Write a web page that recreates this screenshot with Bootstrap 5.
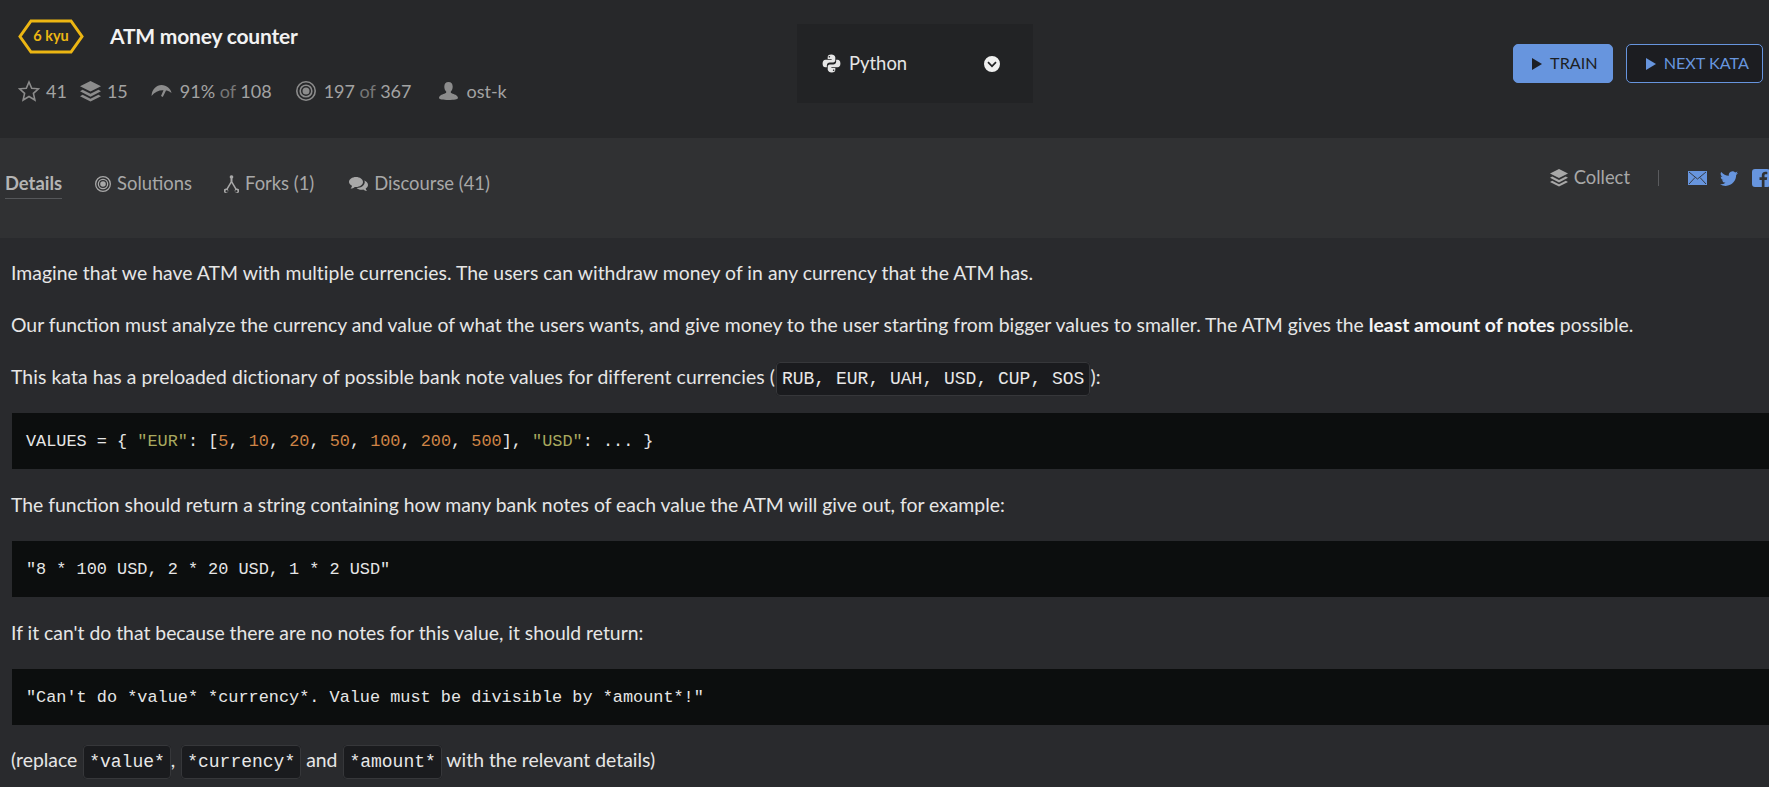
<!DOCTYPE html>
<html lang="en">
<head>
<meta charset="UTF-8" />
<title>ATM money counter</title>
<link href="https://cdn.jsdelivr.net/npm/bootstrap@5.3.0/dist/css/bootstrap.min.css" rel="stylesheet" />
<style>
  html, body { height: 787px; overflow: hidden; }
  body { background: #292a2d; color: #e3e3e3; font-family: Lato, "Liberation Sans", sans-serif; font-size: 19.36px; }
  svg { fill: currentColor; flex: none; }

  .kata-head { height: 138px; background: #27282a; }
  .kata-left { width: 797px; padding: 19px 0 0 18px; }
  .kata-title { font-size: 21px; font-weight: 700; color: #f2f2f2; margin: -2px 0 0 26px; letter-spacing: -.2px; }
  .kyu-text { font: 700 14.5px Lato, sans-serif; fill: #ecb613; }
  .stat-row { color: #a3a3a3; font-size: 18px; margin-top: 25px; line-height: 24px; }
  .stat-row svg { color: #8c8c8c; }
  .stat-dim { color: #777; }
  .stat-num { margin-left: 6px; }
  .stat-pack { margin-left: 13px; }
  .stat-speed { margin-left: 23px; }
  .stat-hits { margin-left: 24px; }
  .stat-user { margin-left: 27px; }
  .stat-name { margin-left: 7px; }

  .lang-box { width: 236px; height: 79px; margin-top: 24px; background: #222325; color: #e6e6e6; padding: 0 33px 0 25px; font-size: 18.4px; }
  .lang-chevron { color: #f0f0f0; }

  .kata-actions { margin: 44px 6px 0 auto; gap: 13px; }
  .act-btn { height: 39px; font-size: 16.2px; border-radius: 5px; display: flex; align-items: center; gap: 8px; }
  .act-train { background: #6795de; border: 1px solid #6795de; color: #1d1f24; padding: 0 14px 0 18px; }
  .act-next { background: #1c1d21; border: 1px solid #6795de; color: #6795de; padding: 0 13px 0 19px; }

  .kata-tabs { height: 100px; background: #303133; color: #a8a8a8; padding: 0 0 0 5px; font-size: 18.4px; }
  .tab-item { height: 30px; margin-top: 31px; gap: 6px; }
  .tab-active { font-weight: 700; color: #b4b4b4; border-bottom: 1px solid #55575a; margin-right: 33px; }
  .tab-gap { margin-right: 32px; }
  .tab-wide { margin-right: 35px; }
  .kata-share { margin: 20px -1px 0 auto; height: 40px; }
  .share-icon { margin-right: 6px; }
  .share-blue { color: #6795de; }
  .share-sep { width: 1px; height: 16px; background: #5a5b5e; margin: 0 29px 0 28px; }
  .share-tw { margin-left: 13px; }
  .share-fb { margin-left: 14px; }

  .kata-desc { padding: 0 0 0 11px; line-height: 27px; }
  .kata-desc p { margin: 0 0 25px; white-space: nowrap; color: #e6e6e6; }
  .kata-desc p:first-child { padding-top: 21px; letter-spacing: .04px; margin-bottom: 25px; }
  .kata-desc p:has(+ .code-block) { margin-bottom: 23px; }
  .kata-desc .wide-line { letter-spacing: .08px; }
  .kata-desc .lead-in { margin-bottom: 22px; }
  .kata-desc .last-line { margin-top: -1px; }
  .code-block { background: #0c0e0e; color: #e6e6e6; margin: 0 -1px 22px 1px; height: 56px; padding: 16px 14px; font: 16.86px/26px "Liberation Mono", monospace; white-space: pre; overflow: hidden; border-radius: 0; }
  .code-block code { color: inherit; font: inherit; }
  .tok-str { color: #a9a95f; }
  .tok-num { color: #cf8446; }
  .inline-code { background: #1a1b1e; border: 1px solid #36373a; border-radius: 4px; color: #e8e8e8; font: 18px "Liberation Mono", monospace; letter-spacing: 0; padding: 6px 5px; margin: 0 0 0 1px; }
  .kata-desc b { color: #f5f5f5; }
</style>
</head>
<body>
<svg width="0" height="0" class="position-absolute">
  <symbol id="i-layers" viewBox="1 1 18 18"><path d="M10 1l9 4.500-9 4.500-9-4.500z"/><path d="M3.200 8.600L10 12l6.800-3.400L19 9.800l-9 4.600-9-4.600z"/><path d="M3.200 12.800L10 16.200l6.800-3.400 2.200 1.200-9 4.600-9-4.600z"/></symbol>
  <symbol id="i-target" viewBox="0 0 20 20"><path fill-rule="evenodd" d="M10 0a10 10 0 1 1 0 20 10 10 0 0 1 0-20zm0 1.600a8.400 8.400 0 1 0 0 16.800 8.400 8.400 0 0 0 0-16.800zM10 3.400a6.600 6.600 0 1 1 0 13.200 6.600 6.600 0 0 1 0-13.200zm0 1.600a5 5 0 1 0 0 10 5 5 0 0 0 0-10zM10 6.500a3.500 3.500 0 1 1 0 7 3.500 3.500 0 0 1 0-7z"/></symbol>
  <symbol id="i-python" viewBox="0 0 16 16"><g id="py-half"><path fill-rule="evenodd" d="M7.900.5C5.500.5 4.800 1.400 4.800 2.700v1.500h3.300v.6H2.900C1.500 4.800.5 5.900.5 8c0 2.200 1 3.200 2.300 3.200h1.300V9.500c0-1.300 1.100-2.300 2.400-2.300h2.900c1 0 1.800-.8 1.800-1.900V2.700C10.800 1.400 9.700.5 7.900.5zM6.200 1.600a.7.7 0 1 1 0 1.400.7.7 0 0 1 0-1.400z"/></g><use href="#py-half" transform="rotate(180 8 8)"/></symbol>
</svg>

<header class="kata-head d-flex">
  <div class="kata-left">
    <div class="d-flex align-items-center">
      <svg width="66" height="35" viewBox="0 0 66 35">
        <polygon points="13,2 53,2 64,17.500 53,33 13,33 2,17.500" fill="none" stroke="#ecb613" stroke-width="3"/>
        <text class="kyu-text" x="33" y="22" text-anchor="middle">6 kyu</text>
      </svg>
      <h1 class="kata-title">ATM money counter</h1>
    </div>
    <div class="stat-row d-flex align-items-center">
      <svg width="22" height="22" viewBox="0 0 22 22"><path d="M11 2l2.700 6.200 6.800.6-5.100 4.500 1.500 6.700L11 16.500 5.100 20l1.500-6.700L1.500 8.800l6.800-.6z" fill="none" stroke="currentColor" stroke-width="1.600"/></svg>
      <span class="stat-num">41</span>
      <svg class="stat-pack" width="21" height="21"><use href="#i-layers"/></svg>
      <span class="stat-num">15</span>
      <svg class="stat-speed" width="21" height="14" viewBox="0 0 21 14"><path d="M.5 12C1 5 5.500 1 10.500 1s9.500 4 10 8C18 7 16 6.500 15 6.500L11.800 13 10 12l2.500-5.800C8 6 3.500 8 .5 12z"/></svg>
      <span class="ms-2">91% <span class="stat-dim">of</span> 108</span>
      <svg class="stat-hits" width="20" height="20"><use href="#i-target"/></svg>
      <span class="ms-2">197 <span class="stat-dim">of</span> 367</span>
      <svg class="stat-user" width="21" height="21" viewBox="0 0 21 21"><path d="M10.500 1c2.800 0 4.200 2 4.200 4.700 0 2.100-.9 4-2 5 0 1 .5 1.500 2 2 2.500.8 5.300 2 5.300 4.300 0 1.300-4 2-9.500 2S1 18.300 1 17c0-2.300 2.800-3.500 5.300-4.300 1.500-.5 2-1 2-2-1.100-1-2-2.900-2-5C6.300 3 7.700 1 10.500 1z"/></svg>
      <span class="stat-name">ost-k</span>
    </div>
  </div>
  <div class="lang-box d-flex align-items-center">
    <svg width="19" height="19"><use href="#i-python"/></svg>
    <span class="ms-2">Python</span>
    <svg class="lang-chevron ms-auto" width="16" height="16" viewBox="0 0 16 16"><path fill-rule="evenodd" d="M8 0a8 8 0 1 1 0 16A8 8 0 0 1 8 0zM4.600 5.500L3.400 6.800 8 11.400l4.600-4.600-1.200-1.300L8 8.900z"/></svg>
  </div>
  <div class="kata-actions d-flex">
    <a class="act-btn act-train text-decoration-none" href="#"><svg width="10" height="12" viewBox="0 0 10 12"><path d="M0 0l10 6-10 6z"/></svg>TRAIN</a>
    <a class="act-btn act-next text-decoration-none" href="#"><svg width="10" height="12" viewBox="0 0 10 12"><path d="M0 0l10 6-10 6z"/></svg>NEXT KATA</a>
  </div>
</header>

<nav class="kata-tabs d-flex">
  <div class="tab-item tab-active d-flex align-items-center">Details</div>
  <div class="tab-item tab-gap d-flex align-items-center"><svg width="16" height="16"><use href="#i-target"/></svg>Solutions</div>
  <div class="tab-item tab-wide d-flex align-items-center"><svg width="15" height="20" viewBox="0 0 15 20"><path d="M7.500 1.200a1.800 1.800 0 0 1 1 3.300v3.200l4 6.800a2.300 2.300 0 1 1-1.300.8L7.500 9 3.800 15.300a2.300 2.300 0 1 1-1.300-.8l4-6.800V4.500a1.800 1.800 0 0 1 1-3.300zM2.700 16a1.200 1.200 0 1 0 0 2.400 1.200 1.200 0 0 0 0-2.400zm9.600 0a1.200 1.200 0 1 0 0 2.400 1.200 1.200 0 0 0 0-2.400z"/></svg>Forks (1)</div>
  <div class="tab-item d-flex align-items-center"><svg width="19" height="16" viewBox="0 0 19 16"><path d="M7 1c3.800 0 7 2.200 7 5s-3.200 5-7 5l-1.200-.1C4.700 12 3.200 12.500 1.500 12.600c.8-.8 1.400-1.800 1.500-2.800C1.200 8.900 0 7.500 0 6c0-2.800 3.200-5 7-5z"/><path d="M15.200 4.500C17.400 5.400 19 7 19 9c0 1.400-.9 2.600-2.300 3.500.1.900.6 1.800 1.300 2.500-1.500-.1-2.800-.6-3.800-1.500-.6.100-1.100.2-1.700.2-2 0-3.800-.7-4.900-1.800 4.600.1 8.200-2.700 8.200-6.200 0-.1 0-.1-.2-.2z"/></svg>Discourse (41)</div>
  <div class="kata-share d-flex align-items-center">
    <svg width="18" height="18" class="share-icon"><use href="#i-layers"/></svg>
    <span>Collect</span>
    <span class="share-sep"></span>
    <svg class="share-blue" width="19" height="14" viewBox="0 0 19 14"><path d="M0 0h19v14H0z"/><path d="M1 1l8.500 7L18 1M1 13l6-6.500M18 13l-6-6.500" fill="none" stroke="#303133" stroke-width=".9"/></svg>
    <svg class="share-blue share-tw" width="18" height="18" viewBox="0 0 16 16"><path d="M5.026 15c6.038 0 9.341-5.003 9.341-9.334 0-.14 0-.282-.006-.422A6.685 6.685 0 0 0 16 3.542a6.658 6.658 0 0 1-1.889.518 3.301 3.301 0 0 0 1.447-1.817 6.533 6.533 0 0 1-2.087.793A3.286 3.286 0 0 0 7.875 6.030a9.325 9.325 0 0 1-6.767-3.429 3.289 3.289 0 0 0 1.018 4.382A3.323 3.323 0 0 1 .64 6.575v.045a3.288 3.288 0 0 0 2.632 3.218 3.203 3.203 0 0 1-.865.115 3.230 3.230 0 0 1-.614-.057 3.283 3.283 0 0 0 3.067 2.277A6.588 6.588 0 0 1 .78 13.580a6.320 6.320 0 0 1-.78-.045A9.344 9.344 0 0 0 5.026 15z"/></svg>
    <svg class="share-blue share-fb" width="18" height="18" viewBox="0 0 18 18"><path fill-rule="evenodd" d="M3 0h12a3 3 0 0 1 3 3v12a3 3 0 0 1-3 3h-2.500v-7h2.300l.4-2.700h-2.700V6.600c0-.8.300-1.300 1.400-1.300h1.400V2.900c-.3 0-1.100-.1-2-.1-2.100 0-3.500 1.300-3.500 3.600v1.900H7.500V11h2.300v7H3a3 3 0 0 1-3-3V3a3 3 0 0 1 3-3z"/></svg>
  </div>
</nav>

<main class="kata-desc">
  <p>Imagine that we have ATM with multiple currencies. The users can withdraw money of in any currency that the ATM has.</p>
  <p>Our function must analyze the currency and value of what the users wants, and give money to the user starting from bigger values to smaller. The ATM gives the <b>least amount of notes</b> possible.</p>
  <p class="wide-line">This kata has a preloaded dictionary of possible bank note values for different currencies (<code class="inline-code">RUB, EUR, UAH, USD, CUP, SOS</code>):</p>
  <pre class="code-block"><code>VALUES = { <span class="tok-str">"EUR"</span>: [<span class="tok-num">5</span>, <span class="tok-num">10</span>, <span class="tok-num">20</span>, <span class="tok-num">50</span>, <span class="tok-num">100</span>, <span class="tok-num">200</span>, <span class="tok-num">500</span>], <span class="tok-str">"USD"</span>: ... }</code></pre>
  <p>The function should return a string containing how many bank notes of each value the ATM will give out, for example:</p>
  <pre class="code-block"><code>"8 * 100 USD, 2 * 20 USD, 1 * 2 USD"</code></pre>
  <p class="lead-in">If it can't do that because there are no notes for this value, it should return:</p>
  <pre class="code-block"><code>"Can't do *value* *currency*. Value must be divisible by *amount*!"</code></pre>
  <p class="last-line">(replace <code class="inline-code">*value*</code>, <code class="inline-code">*currency*</code> and <code class="inline-code">*amount*</code> with the relevant details)</p>
</main>
<script src="https://cdn.jsdelivr.net/npm/bootstrap@5.3.0/dist/js/bootstrap.bundle.min.js"></script>
</body>
</html>
